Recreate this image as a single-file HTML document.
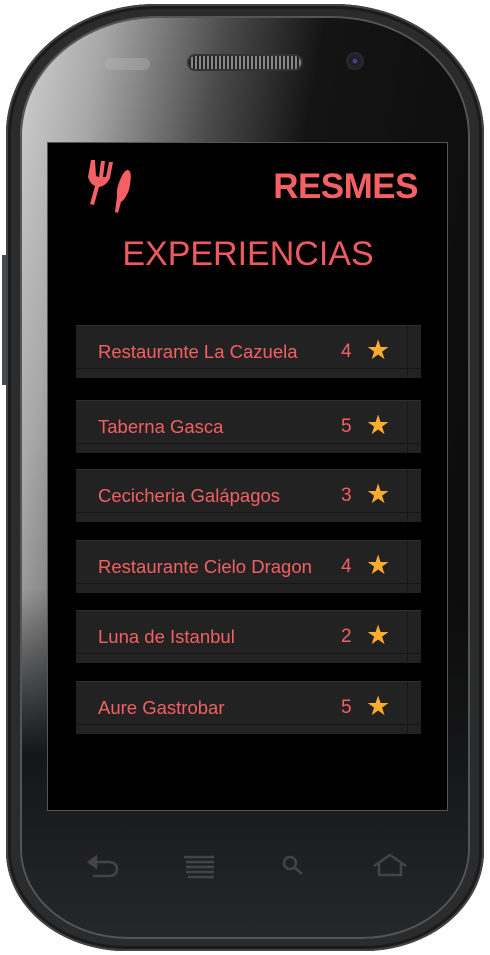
<!DOCTYPE html>
<html><head><meta charset="utf-8"><style>
html,body{margin:0;padding:0;background:#fff;width:490px;height:955px;overflow:hidden;position:relative;font-family:"Liberation Sans",sans-serif}
.phone{position:absolute;left:6px;top:4px;width:478px;height:947px;border-radius:150px 150px 120px 120px/130px 130px 100px 100px;background:#2a2b2d;box-shadow:inset 0 0 0 2px #444,inset 0 0 0 5px #1b1b1c}
.inner{position:absolute;left:14px;top:12px;right:14px;bottom:12px;border-radius:138px 138px 108px 108px/120px 120px 90px 90px;background:linear-gradient(180deg,rgba(0,0,0,0) 62%,#151617 80%,#26272a 100%),linear-gradient(100deg,#d2d2d2 0%,#a8a8a9 14%,#4a4a4b 34%,#141415 50%,#0a0a0a 100%);box-shadow:inset 0 0 0 2px #555}
.side{position:absolute;left:2px;top:255px;width:5px;height:130px;background:#4a4b4d}
.screen{position:absolute;left:48px;top:143px;width:399px;height:667px;background:#000;box-shadow:0 0 0 1px #555}
.speaker{position:absolute;left:189px;top:56px;width:112px;height:13px;border-radius:7px;background:repeating-linear-gradient(90deg,#222 0 2px,#888 2px 4px);box-shadow:0 0 0 2px #333}
.cam{position:absolute;left:346px;top:52px;width:18px;height:18px;border-radius:50%;background:radial-gradient(circle,#4a3a8a 0 2px,#1a1a22 3px,#2a2a30 9px)}
.dots{position:absolute;left:105px;top:58px;width:45px;height:12px;border-radius:6px;background:#bbb;opacity:.35}
.title{position:absolute;right:72px;top:167px;font-size:35px;font-weight:bold;color:#f46063;letter-spacing:-0.5px}
.exp{position:absolute;left:0;width:496px;text-align:center;top:235px;font-size:34px;color:#ee5a5e;letter-spacing:0px}
.card{position:absolute;left:76px;width:345px;height:52px;background:#222;border-top:1px solid #2e2e2e}
.card:after{content:"";position:absolute;left:0;right:0;top:42px;height:1px;background:#161616}
.card:before{content:"";position:absolute;left:331px;top:0;bottom:0;width:1px;background:#171717}
.name{position:absolute;left:22px;top:15px;font-size:18.5px;color:#f46063}
.num{position:absolute;left:265px;top:15px;font-size:19px;color:#f46063}
.star{position:absolute;left:290px;top:11px;font-size:27px;line-height:27px;color:#fdac2f}
</style></head><body>
<div class="side"></div>
<div class="phone"><div class="inner"></div></div>
<div class="dots"></div><div class="speaker"></div><div class="cam"></div>
<div class="screen"></div>
<svg style="position:absolute;left:80px;top:150px" width="60" height="70" viewBox="0 0 60 70">
<path d="M11 10 L8 27 Q10 34 15 36 L10 54 L14 55 L19 37 Q26 36 30 28 L33 12 L29 12 L26 27 L23 27 L25 11 L21 11 L19 27 L16 26 L15 10 Z" fill="#f46063"/>
<path d="M48 20 Q53 21 49 40 Q45 50 41 52 L38 63 L35 62 L37 46 Q36 40 40 30 Q44 20 48 20 Z" fill="#f46063"/>
</svg>
<div class="title">RESMES</div>
<div class="exp">EXPERIENCIAS</div>
<div class="card" style="top:325px"><span class="name">Restaurante La Cazuela</span><span class="num">4</span><span class="star">★</span></div>
<div class="card" style="top:400px"><span class="name">Taberna Gasca</span><span class="num">5</span><span class="star">★</span></div>
<div class="card" style="top:469px"><span class="name">Cecicheria Galápagos</span><span class="num">3</span><span class="star">★</span></div>
<div class="card" style="top:540px"><span class="name">Restaurante Cielo Dragon</span><span class="num">4</span><span class="star">★</span></div>
<div class="card" style="top:610px"><span class="name">Luna de Istanbul</span><span class="num">2</span><span class="star">★</span></div>
<div class="card" style="top:681px"><span class="name">Aure Gastrobar</span><span class="num">5</span><span class="star">★</span></div>
<svg style="position:absolute;left:0;top:850px" width="490" height="40">
<g stroke="#444" stroke-width="2.5" fill="none">
<path d="M92 12 H108 Q117 12 117 19 Q117 26 108 26 H93"/>
<path d="M89 12 L96 7 V17 Z" fill="#444"/>
<path d="M184 7 H214 M186 12 H214 M186 17 H214 M186 22 H214 M188 27 H214"/>
<circle cx="290" cy="13" r="6"/><path d="M294 17 L302 24"/>
<path d="M374 16 L390 5 L406 16 M379 14 V25 H401 V14"/>
</g></svg>
</body></html>
